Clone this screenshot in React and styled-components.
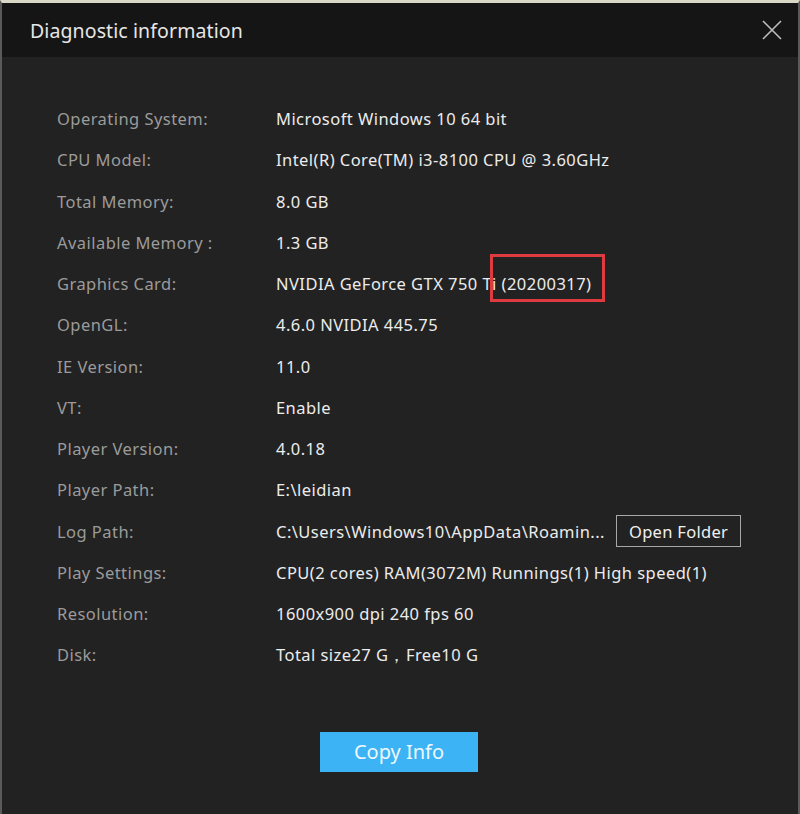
import styled, { createGlobalStyle } from 'styled-components';

const GlobalStyle = createGlobalStyle`
  html, body {
    margin: 0;
    padding: 0;
    background: #222222;
  }
  body {
    font-family: 'Noto Sans', 'Open Sans', sans-serif;
  }
`;

const rows = [
  ['Operating System:', 'Microsoft Windows 10 64 bit'],
  ['CPU Model:', 'Intel(R) Core(TM) i3-8100 CPU @ 3.60GHz'],
  ['Total Memory:', '8.0 GB'],
  ['Available Memory :', '1.3 GB'],
  ['Graphics Card:', 'NVIDIA GeForce GTX 750 Ti (20200317)', 'mark'],
  ['OpenGL:', '4.6.0 NVIDIA 445.75'],
  ['IE Version:', '11.0'],
  ['VT:', 'Enable'],
  ['Player Version:', '4.0.18'],
  ['Player Path:', 'E:\\leidian'],
  ['Log Path:', 'C:\\Users\\Windows10\\AppData\\Roamin...', 'folder'],
  ['Play Settings:', 'CPU(2 cores) RAM(3072M) Runnings(1) High speed(1)'],
  ['Resolution:', '1600x900 dpi 240 fps 60'],
  ['Disk:', 'Total size27 G，Free10 G'],
];

const App = () => {
  return (
    <Window>
      <GlobalStyle />
      <Header>
        <Title>Diagnostic information</Title>
        <CloseButton aria-label="close">
          <svg width="20" height="20" viewBox="0 0 20 20">
            <path d="M1 1 L19 19 M19 1 L1 19" stroke="#bdbdbd" strokeWidth="1.6" fill="none" />
          </svg>
        </CloseButton>
      </Header>
      <Body>
        <InfoList>
          {rows.map(([label, value, extra]) => (
            <Row key={label}>
              <Label>{label}</Label>
              <Value>
                {extra === 'mark' ? (
                  <>
                    NVIDIA GeForce GTX 750 Ti{' '}
                    <Marked>
                      (20200317)
                      <RedBox />
                    </Marked>
                  </>
                ) : (
                  value
                )}
                {extra === 'folder' && <OpenFolder>Open Folder</OpenFolder>}
              </Value>
            </Row>
          ))}
        </InfoList>
        <CopyButton>Copy Info</CopyButton>
      </Body>
    </Window>
  );
};

export default App;

const Window = styled.div`
  width: 800px;
  height: 814px;
  box-sizing: border-box;
  border-top: 3px solid #d9d8c6;
  border-left: 2px solid #5a5a5a;
  border-right: 2px solid #5a5a5a;
  background: #222222;
  display: flex;
  flex-direction: column;
  overflow: hidden;
`;

const Header = styled.div`
  height: 54px;
  flex-shrink: 0;
  background: #151515;
  display: flex;
  align-items: center;
  justify-content: space-between;
  padding: 0 16px 0 28px;
`;

const Title = styled.h1`
  margin: 0;
  font-size: 19.5px;
  font-weight: 400;
  color: #e6e6e6;
  letter-spacing: 0.1px;
`;

const CloseButton = styled.button`
  border: none;
  background: none;
  padding: 0;
  width: 20px;
  height: 20px;
  display: flex;
  cursor: pointer;
`;

const Body = styled.div`
  flex: 1;
  display: flex;
  flex-direction: column;
  align-items: center;
  padding-top: 41px;
`;

const InfoList = styled.div`
  align-self: stretch;
  padding-left: 55px;
  display: flex;
  flex-direction: column;
`;

const Row = styled.div`
  height: 41.25px;
  display: flex;
  align-items: center;
  font-size: 16.5px;
  letter-spacing: 0.45px;
`;

const Label = styled.div`
  width: 219px;
  color: #9b9b9b;
`;

const Value = styled.div`
  color: #ececec;
  display: flex;
  align-items: center;
  white-space: pre;
`;

const Marked = styled.span`
  position: relative;
`;

const RedBox = styled.span`
  position: absolute;
  left: -12px;
  top: -18px;
  width: 115px;
  height: 48px;
  box-sizing: border-box;
  border: 3px solid #de3b40;
`;

const OpenFolder = styled.button`
  margin-left: 11px;
  height: 32px;
  padding: 0 12px;
  background: transparent;
  border: 1px solid #a8a8a8;
  color: #f0f0f0;
  font-family: inherit;
  font-size: 16.5px;
  letter-spacing: 0.3px;
`;

const CopyButton = styled.button`
  margin-top: 56px;
  margin-left: -2px;
  width: 158px;
  height: 40px;
  border: none;
  background: #3cb3f4;
  color: #eef8ff;
  font-family: inherit;
  font-size: 20px;
`;
